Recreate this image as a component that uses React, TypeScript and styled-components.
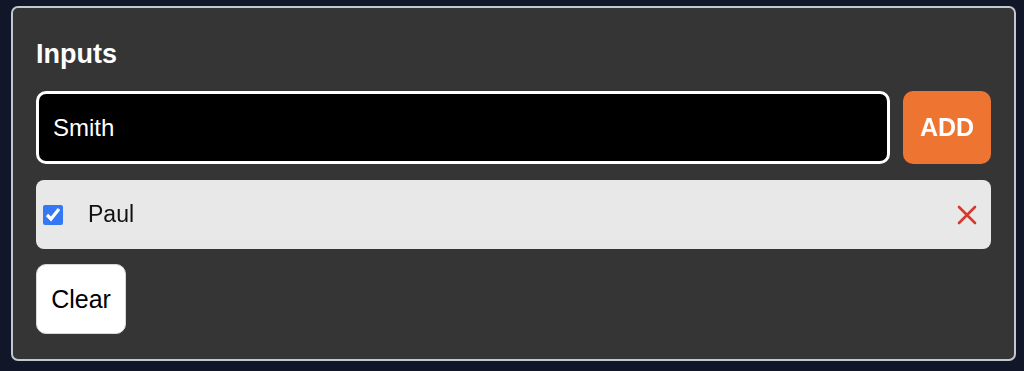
import { useEffect, useRef, useState } from "react";
import styled, { createGlobalStyle } from "styled-components";

const GlobalStyle = createGlobalStyle`
  html, body {
    margin: 0;
    padding: 0;
    background-color: #111729;
    font-family: "Liberation Sans", Arial, sans-serif;
  }
`;

const Page = styled.div`
  padding: 6px 8px 12px 11px;
`;

const Card = styled.section`
  box-sizing: border-box;
  width: 1005px;
  background-color: #353535;
  border: 2px solid #c3c7cf;
  border-radius: 7px;
  padding: 30px 23px 25px;
`;

const Title = styled.h2`
  margin: 0 0 21px;
  font-size: 27px;
  line-height: 32px;
  font-weight: 700;
  color: #ffffff;
`;

const InputRow = styled.div`
  display: flex;
  gap: 13px;
  height: 73px;
  margin-bottom: 16px;
`;

const TextInput = styled.input`
  flex: 1;
  box-sizing: border-box;
  height: 100%;
  background-color: #000000;
  border: 3px solid #ffffff;
  border-radius: 10px;
  padding: 0 14px;
  color: #ffffff;
  caret-color: #ffffff;
  font-family: inherit;
  font-size: 24px;
  outline: none;
`;

const AddButton = styled.button`
  width: 88px;
  height: 100%;
  border: none;
  border-radius: 10px;
  background-color: #ee7431;
  color: #ffffff;
  font-family: inherit;
  font-size: 25px;
  font-weight: 700;
  cursor: pointer;
`;

const List = styled.ul`
  list-style: none;
  margin: 0 0 15px;
  padding: 0;
`;

const Item = styled.li`
  display: flex;
  align-items: center;
  height: 69px;
  padding: 0 14px 0 7px;
  background-color: #e8e8e8;
  border-radius: 8px;
`;

const Check = styled.input`
  width: 20px;
  height: 20px;
  margin: 0 25px 0 0;
  accent-color: #3478f6;
`;

const Label = styled.span`
  flex: 1;
  font-size: 23px;
  color: #111111;
`;

const RemoveButton = styled.button`
  display: flex;
  padding: 0;
  border: none;
  background: none;
  cursor: pointer;
`;

const ClearButton = styled.button`
  width: 90px;
  height: 70px;
  border: 1px solid #d8d8d8;
  border-radius: 10px;
  background-color: #ffffff;
  color: #000000;
  font-family: inherit;
  font-size: 25px;
  cursor: pointer;
`;

type Todo = { id: number; name: string; done: boolean };

export default function App() {
  const [text, setText] = useState("Smith");
  const [todos, setTodos] = useState<Todo[]>([
    { id: 1, name: "Paul", done: true },
  ]);
  const inputRef = useRef<HTMLInputElement>(null);

  // keep the caret at the end of the typed text
  useEffect(() => {
    const el = inputRef.current;
    if (!el) return;
    el.focus();
    el.setSelectionRange(el.value.length, el.value.length);
  }, []);

  const add = () => {
    if (!text.trim()) return;
    setTodos([...todos, { id: Date.now(), name: text.trim(), done: false }]);
    setText("");
  };

  return (
    <Page>
      <GlobalStyle />
      <Card>
        <Title>Inputs</Title>
        <InputRow>
          <TextInput
            ref={inputRef}
            value={text}
            onChange={(e) => setText(e.target.value)}
          />
          <AddButton onClick={add}>ADD</AddButton>
        </InputRow>
        <List>
          {todos.map((t) => (
            <Item key={t.id}>
              <Check
                type="checkbox"
                checked={t.done}
                onChange={() =>
                  setTodos(
                    todos.map((x) =>
                      x.id === t.id ? { ...x, done: !x.done } : x
                    )
                  )
                }
              />
              <Label>{t.name}</Label>
              <RemoveButton
                aria-label="remove"
                onClick={() => setTodos(todos.filter((x) => x.id !== t.id))}
              >
                <svg width="20" height="20" viewBox="0 0 20 20">
                  <path
                    d="M2 2 L18 18 M18 2 L2 18"
                    stroke="#d8392d"
                    strokeWidth="2.6"
                    strokeLinecap="round"
                  />
                </svg>
              </RemoveButton>
            </Item>
          ))}
        </List>
        <ClearButton onClick={() => setTodos([])}>Clear</ClearButton>
      </Card>
    </Page>
  );
}
